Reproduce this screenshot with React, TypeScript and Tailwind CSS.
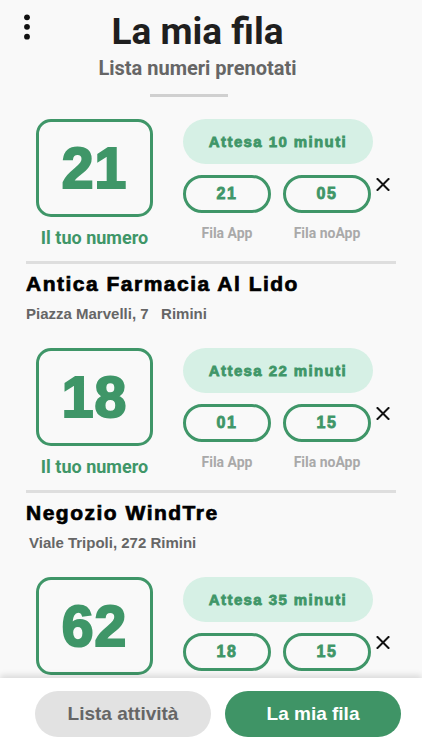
import React from "react";

type Card = {
  num: string;
  wait: string;
  app: string;
  noApp: string;
  name?: string;
  address?: string;
  addrIndent?: boolean;
  partial?: boolean;
};

const cards: Card[] = [
  { num: "21", wait: "Attesa 10 minuti", app: "21", noApp: "05", name: "Antica Farmacia Al Lido", address: "Piazza Marvelli, 7\u00a0\u00a0\u00a0Rimini" },
  { num: "18", wait: "Attesa 22 minuti", app: "01", noApp: "15", name: "Negozio WindTre", address: "Viale Tripoli, 272 Rimini", addrIndent: true },
  { num: "62", wait: "Attesa 35 minuti", app: "18", noApp: "15", partial: true },
];

function CloseIcon() {
  return (
    <svg width="14" height="13" viewBox="0 0 14 13" className="ml-[5px] mt-[3px] shrink-0">
      <path d="M1.5 1 L12.5 12 M12.5 1 L1.5 12" stroke="#111" strokeWidth="2" strokeLinecap="square" fill="none" />
    </svg>
  );
}

function SmallPill({ value, label, partial }: { value: string; label: string; partial?: boolean }) {
  return (
    <div className="flex flex-col items-center w-[88px]">
      <div className="w-[88px] h-[38px] border-[3.5px] border-[#3f9668] rounded-full flex items-center justify-center">
        <span className="font-['Liberation_Sans',Arial,sans-serif] font-bold text-[16px] leading-none tracking-[1.5px] text-[#3f9668] [-webkit-text-stroke:0.8px_#3f9668]">
          {value}
        </span>
      </div>
      {!partial && (
        <div className="mt-[12px] font-['Roboto',sans-serif] font-bold text-[14px] leading-[17px] text-[#a9a9a9]">
          {label}
        </div>
      )}
    </div>
  );
}

function CardView({ c }: { c: Card }) {
  return (
    <div className="flex flex-col">
      <div className="flex pl-[36px]">
        <div className="w-[117px] flex flex-col items-center shrink-0">
          <div className="w-[117px] h-[98px] border-[3.5px] border-[#3f9668] rounded-[15px] flex items-center justify-center">
            <span className="font-['Liberation_Sans',Arial,sans-serif] font-bold text-[57px] leading-none tracking-[1px] text-[#3f9668] [-webkit-text-stroke:2.2px_#3f9668]">
              {c.num}
            </span>
          </div>
          {!c.partial && (
            <div className="mt-[10px] font-['Roboto',sans-serif] font-bold text-[18px] leading-[22px] text-[#3f9668] whitespace-nowrap">
              Il tuo numero
            </div>
          )}
        </div>
        <div className="ml-[30px] flex flex-col">
          <div className="w-[190px] h-[45px] rounded-full bg-[#d6f0e5] flex items-center justify-center">
            <span className="font-['Liberation_Sans',Arial,sans-serif] font-bold text-[15px] leading-none tracking-[1.4px] text-[#3f9668] [-webkit-text-stroke:0.8px_#3f9668] whitespace-nowrap">
              {c.wait}
            </span>
          </div>
          <div className="flex mt-[11px] items-start">
            <SmallPill value={c.app} label="Fila App" partial={c.partial} />
            <div className="ml-[12px]">
              <SmallPill value={c.noApp} label="Fila noApp" partial={c.partial} />
            </div>
            <CloseIcon />
          </div>
        </div>
      </div>
      {!c.partial && (
        <>
          <div className="mx-[26px] mt-[12px] h-[3px] bg-[#dedede]" />
          <div className="px-[26px] pt-[8px]">
            <div className="font-['Liberation_Sans',Arial,sans-serif] font-bold text-[21px] leading-[24px] tracking-[1.5px] text-black [-webkit-text-stroke:0.7px_#000] whitespace-nowrap">
              {c.name}
            </div>
            <div
              className={
                c.addrIndent
                  ? "mt-[9px] pl-[3px] font-['Liberation_Sans',Arial,sans-serif] font-bold text-[15px] leading-[18px] text-[#666666] whitespace-nowrap"
                  : "mt-[9px] font-['Liberation_Sans',Arial,sans-serif] font-bold text-[15px] leading-[18px] text-[#666666] whitespace-nowrap"
              }
            >
              {c.address}
            </div>
          </div>
          <div className="h-[25px]" />
        </>
      )}
    </div>
  );
}

export default function App() {
  return (
    <div className="w-full h-[750px] flex flex-col bg-[#f9f9f9] overflow-hidden">
      <div className="flex-1 min-h-0 overflow-hidden flex flex-col">
        <div className="flex">
          <div className="w-[50px] pl-[22px] pt-[12px] shrink-0">
            <svg width="10" height="30" viewBox="0 0 10 30">
              <circle cx="5" cy="5.3" r="2.9" fill="#111" />
              <circle cx="5" cy="14.8" r="2.9" fill="#111" />
              <circle cx="5" cy="24.7" r="2.9" fill="#111" />
            </svg>
          </div>
          <div className="flex-1 mr-[77px] flex flex-col items-center pt-[10px]">
            <div className="font-['Roboto',sans-serif] font-bold text-[37px] leading-[44px] text-[#1f1f1f] whitespace-nowrap">
              La mia fila
            </div>
            <div className="mt-[2px] font-['Roboto',sans-serif] font-bold text-[20px] leading-[24px] text-[#666666] whitespace-nowrap">
              Lista numeri prenotati
            </div>
          </div>
        </div>
        <div className="ml-[150px] mt-[14px] w-[78px] h-[3px] bg-[#d0d0d0]" />
        <div className="mt-[22px] flex flex-col">
          {cards.map((c, i) => (
            <CardView key={i} c={c} />
          ))}
        </div>
      </div>
      <div className="relative z-10 h-[72px] shrink-0 bg-white shadow-[0_-3px_6px_rgba(0,0,0,0.12)] flex items-start pt-[13px] pl-[35px] gap-[14px]">
        <div className="w-[176px] h-[46px] rounded-full bg-[#e2e2e2] flex items-center justify-center">
          <span className="font-['Liberation_Sans',Arial,sans-serif] font-bold text-[19px] text-[#666666]">Lista attività</span>
        </div>
        <div className="w-[176px] h-[46px] rounded-full bg-[#3f9466] flex items-center justify-center">
          <span className="font-['Liberation_Sans',Arial,sans-serif] font-bold text-[19px] text-white">La mia fila</span>
        </div>
      </div>
    </div>
  );
}
